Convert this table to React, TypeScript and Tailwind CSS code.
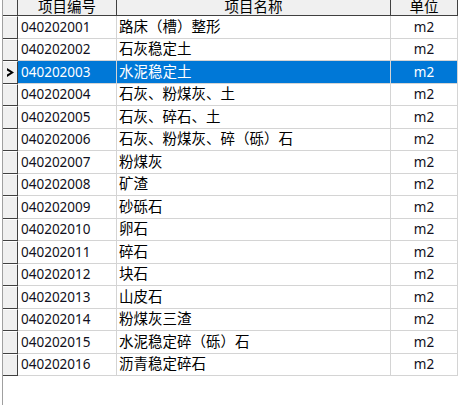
import React from 'react';

interface Item {
  code: string;
  name: string;
  unit: string;
}

const items: Item[] = [
  { code: '040202001', name: '路床（槽）整形', unit: 'm2' },
  { code: '040202002', name: '石灰稳定土', unit: 'm2' },
  { code: '040202003', name: '水泥稳定土', unit: 'm2' },
  { code: '040202004', name: '石灰、粉煤灰、土', unit: 'm2' },
  { code: '040202005', name: '石灰、碎石、土', unit: 'm2' },
  { code: '040202006', name: '石灰、粉煤灰、碎（砾）石', unit: 'm2' },
  { code: '040202007', name: '粉煤灰', unit: 'm2' },
  { code: '040202008', name: '矿渣', unit: 'm2' },
  { code: '040202009', name: '砂砾石', unit: 'm2' },
  { code: '040202010', name: '卵石', unit: 'm2' },
  { code: '040202011', name: '碎石', unit: 'm2' },
  { code: '040202012', name: '块石', unit: 'm2' },
  { code: '040202013', name: '山皮石', unit: 'm2' },
  { code: '040202014', name: '粉煤灰三渣', unit: 'm2' },
  { code: '040202015', name: '水泥稳定碎（砾）石', unit: 'm2' },
  { code: '040202016', name: '沥青稳定碎石', unit: 'm2' },
];

const SELECTED = '040202003';

export default function App() {
  return (
    <div className="w-[471px] h-[405px] bg-white overflow-hidden font-['Noto_Sans','Noto_Sans_CJK_SC',sans-serif] text-black">
      <div className="ml-[2px] h-full border-l border-[#a0a0a0]">
        {/* Header (scrolled slightly, top of the captions is clipped) */}
        <div className="flex h-[16px] w-[455px] overflow-hidden bg-[#f0f0f0] border-b border-[#404040]">
          <div className="w-[15px] shrink-0 border-r border-[#404040]" />
          <div className="w-[99px] shrink-0 border-r border-[#404040] flex justify-center text-[14.5px] leading-none -mt-[1px]">项目编号</div>
          <div className="w-[274px] shrink-0 border-r border-[#404040] flex justify-center text-[14.5px] leading-none -mt-[1px]">项目名称</div>
          <div className="w-[67px] shrink-0 border-r border-[#404040] flex justify-center text-[14.5px] leading-none -mt-[1px]">单位</div>
        </div>

        {/* Rows */}
        {items.map((item) => {
          const sel = item.code === SELECTED;
          return (
            <div key={item.code} className="flex h-[22.5px] w-[455px]">
              <div className="w-[15px] shrink-0 bg-[#f0f0f0] border-r border-b border-[#404040] border-t border-t-white flex items-center justify-center">
                {sel && (
                  <svg width="9" height="11" viewBox="0 0 9 11">
                    <path d="M1 1 L8 5.5 L1 10 L1 7.5 L4.5 5.5 L1 3.5 Z" fill="#000" />
                  </svg>
                )}
              </div>
              <div
                className={`w-[99px] shrink-0 border-r border-b border-[#d4d4d4] flex items-center pl-[3px] text-[13.5px] ${
                  sel ? 'bg-[#0078d7] text-white' : 'text-[#101020]'
                }`}
              >
                {item.code}
              </div>
              <div
                className={`w-[274px] shrink-0 border-r border-b border-[#d4d4d4] flex items-center pl-[2px] text-[14.5px] ${
                  sel ? 'bg-[#0078d7] text-white' : ''
                }`}
              >
                {item.name}
              </div>
              <div
                className={`w-[67px] shrink-0 border-r border-b border-[#d4d4d4] flex items-center justify-center text-[13.5px] ${
                  sel ? 'bg-[#0078d7] text-white' : 'text-[#101020]'
                }`}
              >
                {item.unit}
              </div>
            </div>
          );
        })}
      </div>
    </div>
  );
}
